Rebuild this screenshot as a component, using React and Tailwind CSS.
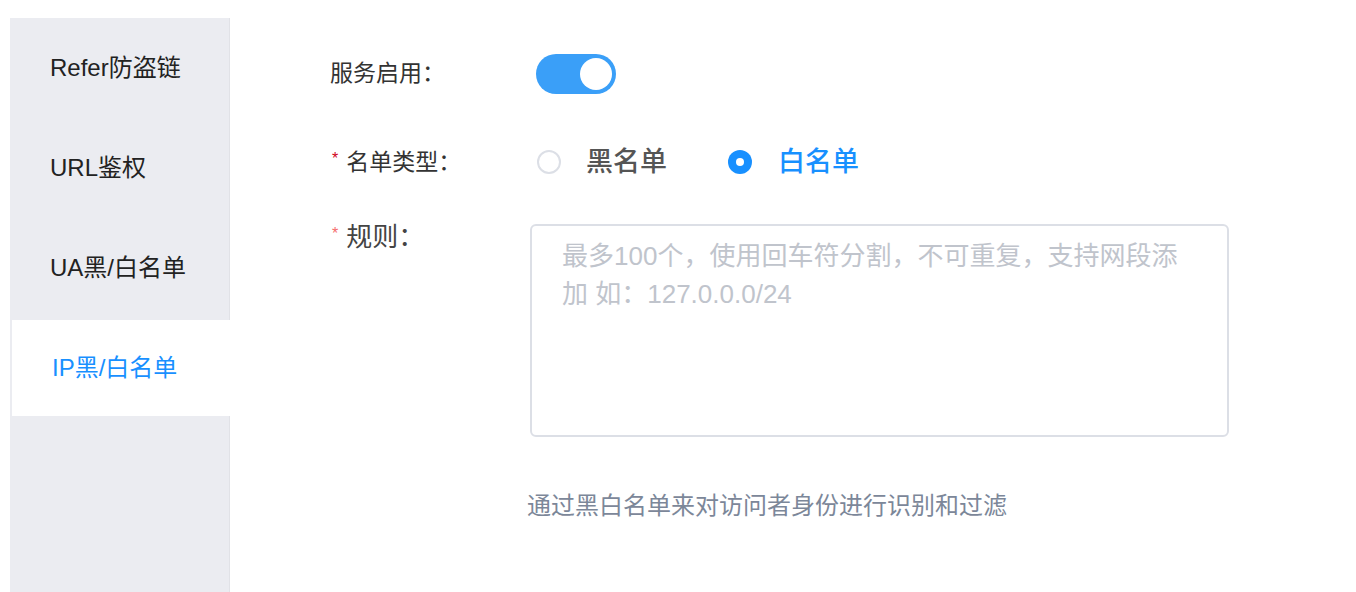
import { useState } from 'react';

const tabs = ['Refer防盗链', 'URL鉴权', 'UA黑/白名单', 'IP黑/白名单'];
const font = { fontFamily: '"Liberation Sans", "Noto Sans CJK SC", sans-serif' };

export default function App() {
  const [active, setActive] = useState(3);
  const [enabled, setEnabled] = useState(true);
  const [listType, setListType] = useState('white');

  return (
    <div className="flex w-[1356px] h-[592px] bg-white overflow-hidden" style={font}>
      <aside className="ml-[10px] mt-[18px] w-[220px] bg-[#ebecf1] border-r border-[#e1e2e7] flex flex-col">
        {tabs.map((t, i) => (
          <button
            key={t}
            onClick={() => setActive(i)}
            className={
              i === active
                ? 'h-[96px] my-[2px] ml-[2px] -mr-px bg-white text-left pl-[40px] text-[24px] leading-[30px] text-[#1890ff]'
                : 'h-[100px] text-left pl-[40px] text-[24px] leading-[30px] text-[#222]'
            }
          >
            {t}
          </button>
        ))}
      </aside>

      <main className="flex-1 pl-[100px] pt-[54px]">
        <div className="flex items-center h-[40px]">
          <label className="w-[200px] text-[23px] leading-[30px] text-[#333] -mt-[3px]">服务启用：</label>
          <button
            onClick={() => setEnabled(!enabled)}
            className={`ml-[6px] w-[80px] h-[40px] rounded-full flex items-center px-[4px] ${enabled ? 'bg-[#3a9ff8] justify-end' : 'bg-[#dcdfe6] justify-start'}`}
          >
            <span className="w-[32px] h-[32px] rounded-full bg-white" />
          </button>
        </div>

        <div className="flex items-center h-[40px] mt-[48px]">
          <label className="w-[200px] text-[23px] leading-[30px] text-[#333] flex items-center">
            <span className="text-[#d0021b] text-[16px] mr-[8px] ml-[2px] -mt-[6px]">*</span>名单类型：
          </label>
          <button onClick={() => setListType('black')} className="ml-[7px] flex items-center">
            <span className={`w-[24px] h-[24px] rounded-full flex items-center justify-center ${listType === 'black' ? 'bg-[#1890ff]' : 'border-2 border-[#dcdfe6] bg-white'}`}>
              {listType === 'black' && <span className="w-[8px] h-[8px] rounded-full bg-white" />}
            </span>
            <span className={`ml-[25px] text-[27px] leading-[34px] font-medium ${listType === 'black' ? 'text-[#1890ff]' : 'text-[#555]'}`}>黑名单</span>
          </button>
          <button onClick={() => setListType('white')} className="ml-[61px] flex items-center">
            <span className={`w-[24px] h-[24px] rounded-full flex items-center justify-center ${listType === 'white' ? 'bg-[#1890ff]' : 'border-2 border-[#dcdfe6] bg-white'}`}>
              {listType === 'white' && <span className="w-[8px] h-[8px] rounded-full bg-white" />}
            </span>
            <span className={`ml-[26px] text-[27px] leading-[34px] font-medium ${listType === 'white' ? 'text-[#1890ff]' : 'text-[#555]'}`}>白名单</span>
          </button>
        </div>

        <div className="flex items-start mt-[42px]">
          <label className="w-[200px] text-[26px] leading-[28px] text-[#444] flex items-center -mt-[1px]">
            <span className="text-[#f56c6c] text-[16px] mr-[8px] ml-[2px] -mt-[6px]">*</span>规则：
          </label>
          <textarea
            className="w-[699px] h-[213px] border-2 border-[#dcdfe6] rounded-[6px] pl-[30px] pr-[26px] pt-[11px] text-[26px] leading-[38px] resize-none outline-none placeholder:text-[#c0c4cc] text-[#333]"
            style={font}
            placeholder="最多100个，使用回车符分割，不可重复，支持网段添加 如：127.0.0.0/24"
          />
        </div>

        <p className="ml-[197px] mt-[54px] text-[24px] leading-[30px] text-[#7c8799]">通过黑白名单来对访问者身份进行识别和过滤</p>
      </main>
    </div>
  );
}
